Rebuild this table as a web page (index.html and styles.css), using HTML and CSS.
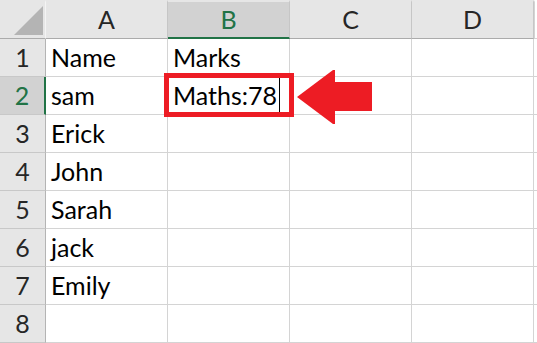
FILE: index.html
```html
<!DOCTYPE html>
<html lang="en">
<head>
<meta charset="utf-8">
<title>Sheet1</title>
<link rel="stylesheet" href="styles.css">
</head>
<body>
<div class="sheet">
  <div class="grid">
    <div class="hd corner"><span class="tri"></span></div>
    <div class="hd col">A</div>
    <div class="hd col sel">B</div>
    <div class="hd col">C</div>
    <div class="hd col">D</div>
    <div class="hd rest"></div>

    <div class="rh">1</div><div class="c">Name</div><div class="c">Marks</div><div class="c"></div><div class="c"></div><div class="c end"></div>
    <div class="rh sel">2</div><div class="c">sam</div><div class="c active">Maths:78<span class="caret"></span></div><div class="c"></div><div class="c"></div><div class="c end"></div>
    <div class="rh">3</div><div class="c">Erick</div><div class="c"></div><div class="c"></div><div class="c"></div><div class="c end"></div>
    <div class="rh">4</div><div class="c">John</div><div class="c"></div><div class="c"></div><div class="c"></div><div class="c end"></div>
    <div class="rh">5</div><div class="c">Sarah</div><div class="c"></div><div class="c"></div><div class="c"></div><div class="c end"></div>
    <div class="rh">6</div><div class="c">jack</div><div class="c"></div><div class="c"></div><div class="c"></div><div class="c end"></div>
    <div class="rh">7</div><div class="c">Emily</div><div class="c"></div><div class="c"></div><div class="c"></div><div class="c end"></div>
    <div class="rh">8</div><div class="c"></div><div class="c"></div><div class="c"></div><div class="c"></div><div class="c end"></div>
  </div>

  <!-- callout: box around the edited cell and an arrow pointing at it -->
  <div class="callout-box"></div>
  <svg class="callout-arrow" width="80" height="60" viewBox="0 0 80 60">
    <polygon points="1,29 37,2 39,2 39,14 76,14 76,43 39,43 39,56 37,56" fill="#ed1c24"/>
  </svg>
</div>
</body>
</html>
```

FILE: styles.css
```css
html, body {
  margin: 0;
  padding: 0;
  background: #ffffff;
}

.sheet {
  position: relative;
  width: 537px;
  height: 343px;
  overflow: hidden;
  font-family: Lato, "Open Sans", sans-serif;
  font-size: 25px;
  color: #000000;
}

.grid {
  display: grid;
  grid-template-columns: 46px 122px 122px 122px 122px 1fr;
  grid-template-rows: 39px repeat(8, 38px);
}

.grid > div {
  box-sizing: border-box;
}

/* column header strip */
.hd {
  background: #e6e6e6;
  border-top: 2px solid #e6e6e6;
  border-bottom: 1px solid #ababab;
  border-right: 1px solid #c6c6c6;
  display: flex;
  align-items: flex-end;
  justify-content: center;
  padding-bottom: 6px;
  color: #262626;
  line-height: 1;
}

.hd.sel {
  background: #d2d2d2;
  color: #217346;
  border-bottom: 2px solid #217346;
  padding-bottom: 5px;
}

.hd.rest {
  background: #ffffff;
  border-top-color: #ffffff;
  border-right: none;
  border-left: 1px solid #d4d4d4;
  border-bottom: 1px solid #d4d4d4;
}

.hd.corner {
  position: relative;
  border-right: 1px solid #f4f4f4;
}

.tri {
  position: absolute;
  left: 14px;
  top: 4px;
  width: 0;
  height: 0;
  border-left: 29px solid transparent;
  border-bottom: 29px solid #b4b4b4;
}

/* row headers */
.rh {
  background: #e6e6e6;
  border-right: 1px solid #b4b4b4;
  border-bottom: 1px solid #c8c8c8;
  display: flex;
  align-items: flex-end;
  justify-content: center;
  padding-bottom: 6px;
  color: #262626;
  line-height: 1;
}

.rh.sel {
  background: #d2d2d2;
  color: #217346;
  border-right: 2px solid #217346;
}

/* cells */
.c {
  border-right: 1px solid #d4d4d4;
  border-bottom: 1px solid #d4d4d4;
  display: flex;
  align-items: flex-end;
  padding: 0 0 6px 5px;
  line-height: 1;
  white-space: nowrap;
}

.c.end {
  border-right: none;
}

.caret {
  display: inline-block;
  width: 1px;
  height: 37px;
  background: #000000;
  margin-left: 2px;
  margin-bottom: -6px;
  align-self: flex-end;
}

.callout-box {
  position: absolute;
  left: 164px;
  top: 73px;
  width: 130px;
  height: 44px;
  box-sizing: border-box;
  border: 5px solid #ed1c24;
}

.callout-arrow {
  position: absolute;
  left: 296px;
  top: 68px;
}
```
